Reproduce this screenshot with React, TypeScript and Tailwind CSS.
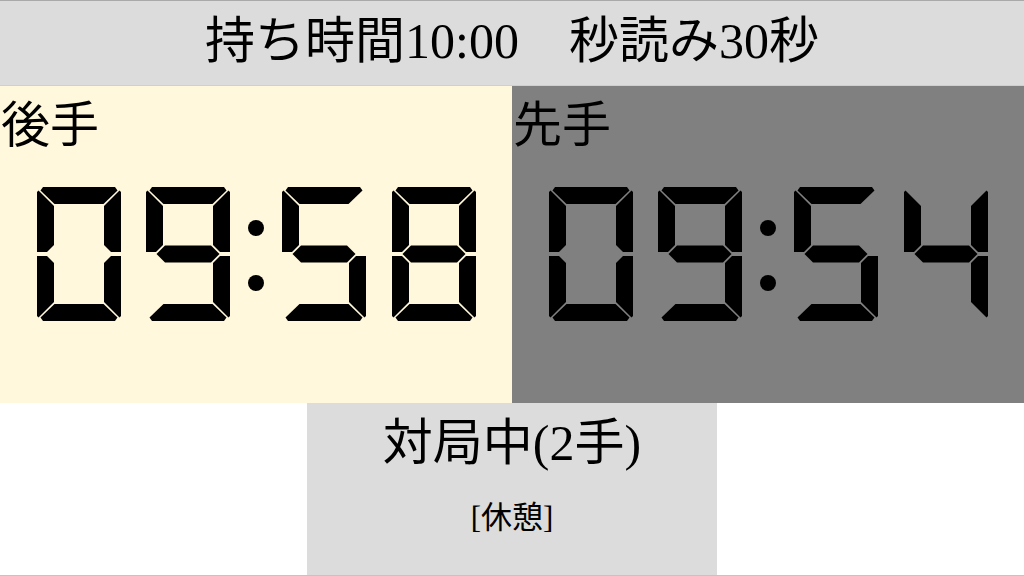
import React from 'react';

// seven-segment digit, drawn in an 84x134 box
const SEG: Record<string, string> = {
  a: '6,0 78,0 80.5,3.5 66.5,17 17.5,17 3.5,3.5',
  b: '84,5 82.5,3.5 67,19 67,58 74,65 84,65',
  c: '84,69 74,69 67,76 67,115 82.5,130.5 84,129',
  d: '6,134 78,134 80.5,130.5 66.5,117 17.5,117 3.5,130.5',
  e: '0,69 10,69 17,76 17,115 1.5,130.5 0,129',
  f: '0,5 1.5,3.5 17,19 17,58 10,65 0,65',
  g: '10.5,67 19,58.5 65,58.5 73.5,67 65,75.5 19,75.5',
};

const ON: Record<string, string> = {
  '0': 'abcdef',
  '1': 'bc',
  '2': 'abdeg',
  '3': 'abcdg',
  '4': 'bcfg',
  '5': 'acdfg',
  '6': 'acdefg',
  '7': 'abc',
  '8': 'abcdefg',
  '9': 'abcdfg',
};

function Digit({ ch, className = '' }: { ch: string; className?: string }) {
  const lit = ON[ch] || '';
  return (
    <svg width="84" height="134" viewBox="0 0 84 134" className={className}>
      {lit.split('').map((s) => (
        <polygon key={s} points={SEG[s]} fill="#000" />
      ))}
    </svg>
  );
}

function Colon() {
  return (
    <svg width="52" height="134" viewBox="0 0 52 134">
      <circle cx="26" cy="41" r="8" fill="#000" />
      <circle cx="26" cy="96" r="8" fill="#000" />
    </svg>
  );
}

function Clock({ time }: { time: string }) {
  const [mm, ss] = time.split(':');
  return (
    <div className="flex justify-center">
      <Digit ch={mm[0]} />
      <Digit ch={mm[1]} className="ml-[25px]" />
      <Colon />
      <Digit ch={ss[0]} />
      <Digit ch={ss[1]} className="ml-[26px]" />
    </div>
  );
}

function Player({ name, time, bg }: { name: string; time: string; bg: string }) {
  return (
    <div className={`w-1/2 h-full ${bg}`}>
      <div className="pt-[16px] pl-[1px] text-[49px] leading-[48px]">{name}</div>
      <div className="mt-[37px]">
        <Clock time={time} />
      </div>
    </div>
  );
}

export default function App() {
  return (
    <div
      className="w-[1024px] h-[576px] flex flex-col bg-white text-black overflow-hidden"
      style={{ fontFamily: '"Liberation Serif", "Noto Sans CJK JP", serif' }}
    >
      <header className="h-[86px] shrink-0 bg-[#dcdcdc] border-t border-[#a9a9a9] border-b border-b-[#cfcfcf] flex items-center justify-center pb-[5px]">
        <span className="text-[50px] leading-none">持ち時間10:00　秒読み30秒</span>
      </header>

      <div className="h-[317px] shrink-0 flex">
        <Player name="後手" time="09:58" bg="bg-[#fff8dc]" />
        <Player name="先手" time="09:54" bg="bg-[#808080]" />
      </div>

      <div className="flex-1 flex justify-center border-b border-[#c4c4c4]">
        <div className="w-[410px] bg-[#dcdcdc] flex flex-col items-center">
          <div className="mt-[12px] text-[50px] leading-[56px]">対局中(2手)</div>
          <div className="mt-[30px] text-[31px] leading-[34px]">[休憩]</div>
        </div>
      </div>
    </div>
  );
}
